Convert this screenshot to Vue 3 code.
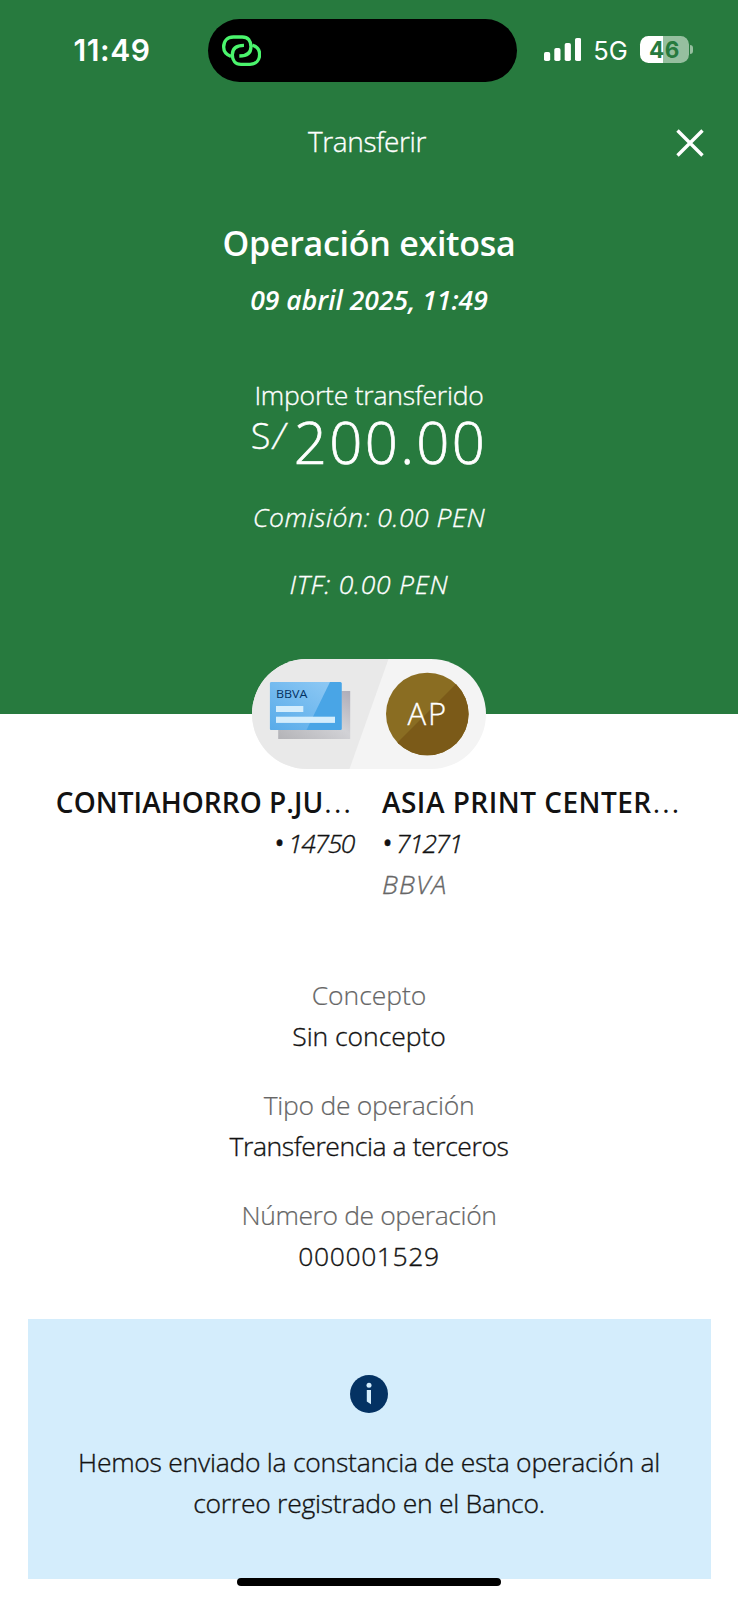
<script setup>
const details = [
  { label: 'Concepto', value: 'Sin concepto', labelClass: 'ls-0', valueClass: 'ls-0' },
  { label: 'Tipo de operación', value: 'Transferencia a terceros', labelClass: 'ls-26', valueClass: 'ls-41' },
  { label: 'Número de operación', value: '000001529', labelClass: 'ls-36', valueClass: 'ls-wide' }
]
const bars = [
  { x: 0, h: 9 },
  { x: 10.3, h: 13 },
  { x: 20.7, h: 18 },
  { x: 31, h: 23 }
]
</script>

<template>
  <div class="screen">
    <header class="hero">
      <div class="status">
        <span class="time">11:49</span>
        <div class="island">
          <svg class="link" viewBox="0 0 118 94" aria-hidden="true">
            <g fill="none" stroke="#4bf56d" stroke-width="10">
              <path d="M27 64C13 59 5 48 5 36C5 17 17 6 34 6H61C78 6 87 18 87 35C87 53 75 63 52 63" />
              <path d="M91 30C105 35 113 46 113 58C113 77 101 88 84 88H57C40 88 31 76 31 59C31 41 43 31 66 31" />
            </g>
          </svg>
        </div>
        <div class="indicators">
          <svg class="signal" viewBox="0 0 37.2 23" aria-hidden="true">
            <rect v-for="b in bars" :key="b.x" :x="b.x" :y="23 - b.h" width="6.2" :height="b.h" rx="1.8" fill="#fff" />
          </svg>
          <span class="network">5G</span>
          <div class="battery"><span>46</span></div>
          <i class="nub"></i>
        </div>
      </div>

      <div class="nav">
        <span class="nav-title">Transferir</span>
        <svg class="close" viewBox="0 0 28 28" aria-hidden="true">
          <path d="M1.5 1.5L26.5 26.5M26.5 1.5L1.5 26.5" stroke="#fff" stroke-width="3.4" fill="none" />
        </svg>
      </div>

      <h1 class="title">Operación exitosa</h1>
      <p class="date">09 abril 2025, 11:49</p>
      <p class="amount-label">Importe transferido</p>
      <p class="amount"><span class="currency">S<i>/</i></span>200.00</p>
      <p class="fee">Comisión: 0.00 PEN</p>
      <p class="fee tax">ITF: 0.00 PEN</p>
    </header>

    <svg class="pill" viewBox="0 0 234 110">
      <defs>
        <clipPath id="pillClip"><rect width="234" height="110" rx="55" /></clipPath>
        <clipPath id="avatarClip"><circle cx="175.3" cy="55" r="41.3" /></clipPath>
        <clipPath id="cardClip"><rect x="17.7" y="23" width="72" height="48" rx="1.5" /></clipPath>
        <linearGradient id="cardLight" x1="0" y1="1" x2="1" y2="0">
          <stop offset="0" stop-color="#58abe9" />
          <stop offset="1" stop-color="#92cbf5" />
        </linearGradient>
        <linearGradient id="cardShade" x1="0" y1="1" x2="1" y2="0">
          <stop offset="0" stop-color="#b3b3b7" />
          <stop offset=".55" stop-color="#d2d2d6" />
          <stop offset="1" stop-color="#aeacb8" />
        </linearGradient>
      </defs>
      <g clip-path="url(#pillClip)">
        <rect width="234" height="110" fill="#f4f4f4" />
        <path d="M0 0H136.5L97.5 110H0Z" fill="#e9e9e9" />
      </g>
      <rect x="26.2" y="32" width="72" height="48" fill="url(#cardShade)" />
      <g clip-path="url(#cardClip)">
        <rect x="17.7" y="23" width="72" height="48" fill="url(#cardLight)" />
        <path d="M78 23H90V71H54.5Z" fill="#49a5e6" />
      </g>
      <rect x="24" y="47" width="27.3" height="6" fill="#d4edfc" />
      <rect x="24" y="57.7" width="59" height="6.2" fill="#d4edfc" />
      <text class="card-logo" x="23.9" y="38.6" textLength="31.5" lengthAdjust="spacingAndGlyphs">BBVA</text>
      <g clip-path="url(#avatarClip)">
        <rect x="133" y="13" width="84" height="84" fill="#8a6d22" />
        <path d="M229 0V110H119Z" fill="#7b5a18" />
      </g>
      <text class="initials" x="155.5" y="65.5">AP</text>
    </svg>

    <section class="parties">
      <div class="party from">
        <p class="name from-name">CONTIAHORRO P.JU<span class="dots">...</span></p>
        <p class="number"><b>•</b> 14750</p>
      </div>
      <div class="party to">
        <p class="name to-name">ASIA PRINT CENTER<span class="dots">...</span></p>
        <p class="number"><b>•</b> 71271</p>
        <p class="bank">BBVA</p>
      </div>
    </section>

    <dl class="details">
      <div v-for="d in details" :key="d.label" class="detail">
        <dt :class="d.labelClass">{{ d.label }}</dt>
        <dd :class="d.valueClass">{{ d.value }}</dd>
      </div>
    </dl>

    <aside class="notice">
      <svg class="info" viewBox="0 0 38 38" aria-hidden="true">
        <circle cx="19" cy="19" r="19" fill="#043263" />
        <circle cx="19" cy="10.2" r="2.5" fill="#d4edfc" />
        <path d="M16.8 15H21V29.3L16.8 26.4Z" fill="#d4edfc" />
      </svg>
      <p>Hemos enviado la constancia de esta operación al<br />correo registrado en el Banco.</p>
    </aside>

    <div class="home"></div>
  </div>
</template>

<style>
body {
  background: #fff;
}
</style>

<style scoped>
.screen {
  position: relative;
  width: 738px;
  height: 1600px;
  overflow: hidden;
  background: #fff;
  color: #121212;
  font-family: 'Open Sans', sans-serif;
  font-weight: 300;
  font-size: 26.5px;
  -webkit-text-stroke: 0.35px currentColor;
}
p, h1, dl, dt, dd {
  margin: 0;
}
.hero {
  height: 714px;
  background: #277a3e;
  color: #fff;
  text-align: center;
}
.status {
  display: grid;
  grid-template-columns: 208px 308.5px 1fr;
  height: 120px;
  box-sizing: border-box;
  padding-top: 19px;
  align-items: start;
  font-family: Inter, sans-serif;
  -webkit-text-stroke: 0;
}
.time {
  padding: 10px 0 0 73.5px;
  text-align: left;
  font-size: 30px;
  line-height: 42px;
  font-weight: 600;
  letter-spacing: 0.6px;
}
.island {
  height: 63.3px;
  border-radius: 32px;
  background: #000;
  display: flex;
}
.link {
  width: 39.3px;
  height: 31.3px;
  margin: 16px 0 0 14px;
}
.indicators {
  display: flex;
  align-items: center;
  margin: 17px 0 0 27.5px;
  height: 27px;
}
.signal {
  width: 37.2px;
  height: 23px;
}
.network {
  margin-left: 12px;
  width: 32px;
  font-size: 25.5px;
  line-height: 27px;
  font-weight: 400;
  padding-top: 2px;
}
.battery {
  width: 49px;
  height: 26.5px;
  margin-left: 14.8px;
  border-radius: 8.5px;
  background: linear-gradient(90deg, #fff 0 23px, #96bf9f 23px);
  color: #277a3e;
  font-size: 22.5px;
  line-height: 28px;
  font-weight: 700;
  letter-spacing: 0.5px;
}
.nub {
  width: 3.2px;
  height: 9px;
  margin-left: 1.3px;
  border-radius: 0 5px 5px 0;
  background: #96bf9f;
}
.nav {
  display: grid;
  grid-template-columns: 1fr auto 1fr;
  height: 40px;
  line-height: 42px;
  font-size: 28px;
}
.nav-title {
  grid-column: 2;
  padding-right: 4px;
  letter-spacing: -0.4px;
}
.close {
  width: 28px;
  height: 28px;
  justify-self: end;
  margin: 8.5px 34px 0 0;
}
.title {
  margin-top: 60.5px;
  font-size: 34px;
  line-height: 44px;
  font-weight: 600;
  letter-spacing: -0.28px;
  -webkit-text-stroke: 0;
}
.date {
  margin-top: 15px;
  line-height: 40px;
  font-weight: 600;
  font-style: italic;
  letter-spacing: 0.03px;
  -webkit-text-stroke: 0;
}
.amount-label {
  margin-top: 55.5px;
  line-height: 40px;
  letter-spacing: -0.22px;
}
.amount {
  margin-top: -3.5px;
  height: 60px;
  font-size: 58px;
  line-height: 60px;
  letter-spacing: 2.35px;
  white-space: nowrap;
  -webkit-text-stroke: 0.7px currentColor;
}
.currency {
  margin-right: 6.5px;
  font-size: 36px;
  line-height: 35px;
  vertical-align: 15px;
  letter-spacing: 2.6px;
  -webkit-text-stroke: 0.35px currentColor;
}
.fee {
  margin-top: 25.7px;
  line-height: 40px;
  font-style: italic;
  letter-spacing: 0.52px;
}
.tax {
  margin-top: 27px;
  letter-spacing: 0.77px;
}
.pill {
  display: block;
  position: relative;
  width: 234px;
  height: 110px;
  margin: -55px auto 0;
}
.card-logo {
  font-size: 11.3px;
  font-weight: 400;
  fill: #043263;
}
.initials {
  font-size: 31px;
  letter-spacing: 1.8px;
  fill: #fff;
  stroke: #fff;
  stroke-width: 0.3px;
}
.parties {
  display: grid;
  grid-template-columns: 356px 1fr;
  column-gap: 26px;
  height: 205.5px;
  padding-top: 12.6px;
  box-sizing: border-box;
  line-height: 41px;
  white-space: nowrap;
}
.from {
  text-align: right;
}
.name {
  font-size: 28px;
  font-weight: 600;
  -webkit-text-stroke: 0;
}
.from-name {
  padding-right: 3px;
  letter-spacing: 0.04px;
}
.to-name {
  letter-spacing: 0.48px;
}
.dots {
  margin-left: 1px;
  font-weight: 400;
  letter-spacing: 2.2px;
}
.number {
  font-style: italic;
  letter-spacing: -1.4px;
}
.number b {
  font-weight: 400;
}
.from .number {
  padding-right: 2px;
}
.bank {
  font-style: italic;
  letter-spacing: 1.1px;
  color: #666;
}
.details {
  display: flex;
  flex-direction: column;
  gap: 28px;
  text-align: center;
  line-height: 41px;
}
.detail dt {
  color: #666;
  -webkit-text-stroke: 0.2px currentColor;
}
.ls-0 {
  letter-spacing: -0.05px;
}
.ls-26 {
  letter-spacing: -0.28px;
}
.ls-36 {
  letter-spacing: -0.4px;
}
.ls-41 {
  letter-spacing: -0.41px;
}
.ls-wide {
  letter-spacing: 0.62px;
}
.notice {
  width: 683px;
  height: 260px;
  margin: 42px auto 0;
  box-sizing: border-box;
  padding-top: 56.3px;
  background: #d4edfc;
  text-align: center;
  line-height: 41px;
  letter-spacing: -0.26px;
}
.info {
  display: block;
  width: 38px;
  height: 38px;
  margin: 0 auto 29px;
}
.home {
  position: absolute;
  left: 237px;
  top: 1577.5px;
  width: 264px;
  height: 8.5px;
  border-radius: 5px;
  background: #000;
}
</style>
